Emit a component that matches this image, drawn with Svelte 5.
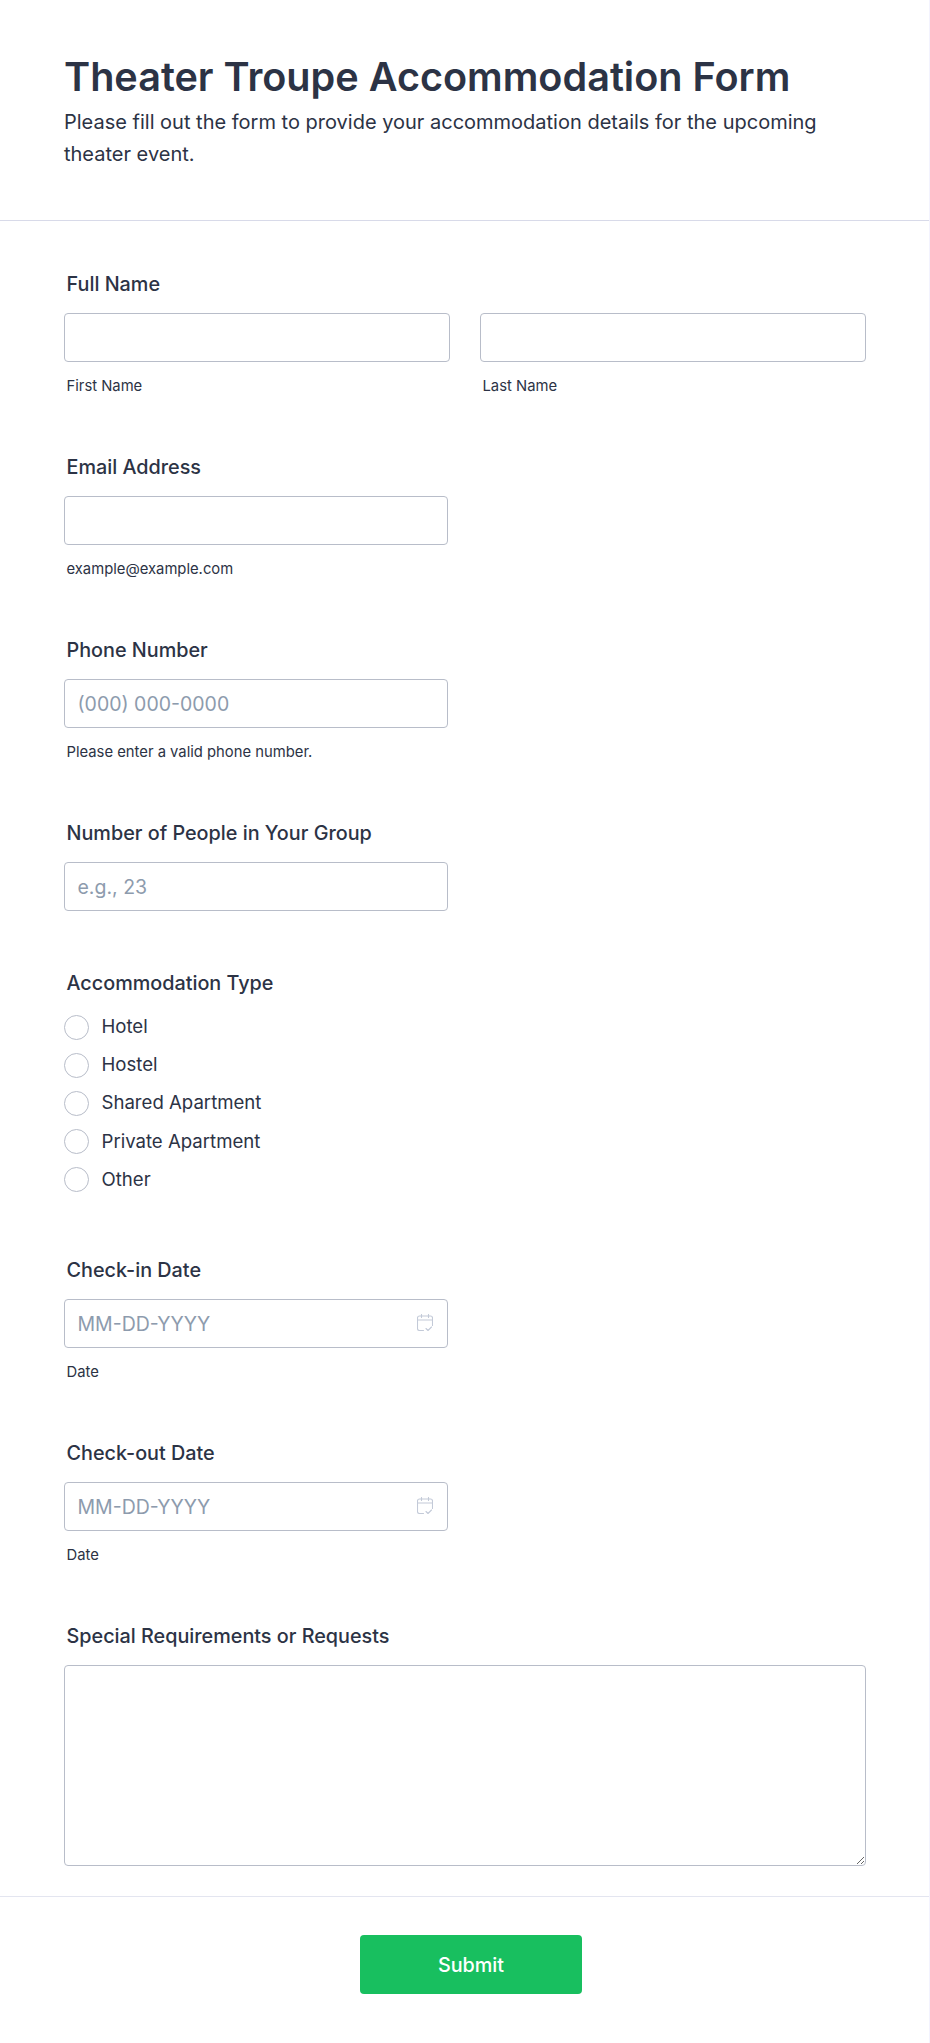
<script lang="ts">
	const ACCOMMODATION_TYPES = ['Hotel', 'Hostel', 'Shared Apartment', 'Private Apartment', 'Other'];
</script>

{#snippet calendar()}
	<svg class="calendar" viewBox="0 0 16 18" fill="none" aria-hidden="true">
		<path d="M6.5 16.5H2.5a2 2 0 0 1-2-2V4a2 2 0 0 1 2-2h11a2 2 0 0 1 2 2v7.5" />
		<path d="M.5 6h15M4.5 .5v3M11.5 .5v3" />
		<path d="M9 14.5l2 2 3.5-3.5" />
	</svg>
{/snippet}

<main class="page">
	<header class="form-header">
		<h1>Theater Troupe Accommodation Form</h1>
		<p>Please fill out the form to provide your accommodation details for the upcoming theater event.</p>
	</header>

	<form class="form-body">
		<div class="field">
			<label class="field-label" for="first">Full Name</label>
			<div class="name-row">
				<div class="name-col">
					<input id="first" type="text" />
					<span class="sub">First Name</span>
				</div>
				<div class="name-col">
					<input id="last" type="text" />
					<span class="sub">Last Name</span>
				</div>
			</div>
		</div>

		<div class="field">
			<label class="field-label" for="email">Email Address</label>
			<input id="email" class="half" type="email" />
			<span class="sub">example@example.com</span>
		</div>

		<div class="field">
			<label class="field-label" for="phone">Phone Number</label>
			<input id="phone" class="half" type="tel" placeholder="(000) 000-0000" />
			<span class="sub">Please enter a valid phone number.</span>
		</div>

		<div class="field">
			<label class="field-label" for="people">Number of People in Your Group</label>
			<input id="people" class="half" type="text" placeholder="e.g., 23" />
		</div>

		<fieldset class="field radios">
			<legend class="field-label">Accommodation Type</legend>
			{#each ACCOMMODATION_TYPES as type}
				<label class="radio">
					<input type="radio" name="accommodation" value={type} />
					<span>{type}</span>
				</label>
			{/each}
		</fieldset>

		<div class="field">
			<label class="field-label" for="checkin">Check-in Date</label>
			<div class="date half">
				<input id="checkin" type="text" placeholder="MM-DD-YYYY" />
				{@render calendar()}
			</div>
			<span class="sub">Date</span>
		</div>

		<div class="field">
			<label class="field-label" for="checkout">Check-out Date</label>
			<div class="date half">
				<input id="checkout" type="text" placeholder="MM-DD-YYYY" />
				{@render calendar()}
			</div>
			<span class="sub">Date</span>
		</div>

		<div class="field requests">
			<label class="field-label" for="requests">Special Requirements or Requests</label>
			<textarea id="requests"></textarea>
		</div>

		<footer class="form-footer">
			<button type="submit">Submit</button>
		</footer>
	</form>
</main>

<style>
	:global(body) {
		background: #fff;
		color: #2c3345;
		font-family: Inter, "Noto Sans", sans-serif;
	}
	.page {
		box-sizing: border-box;
		min-height: 2043px;
		border-right: 1px solid #f3f3fe;
	}
	.form-header {
		padding: 53px 64px 50px;
		border-bottom: 1px solid #d8dae9;
	}
	h1 {
		margin: 0 0 5px;
		font-size: 39.6px;
		line-height: 48px;
		font-weight: 600;
	}
	.form-header p {
		margin: 0;
		font-size: 20px;
		line-height: 32px;
		font-weight: 400;
	}
	.form-body {
		padding: 51px 63px 0 64px;
	}
	.field {
		display: block;
		margin: 0 0 60px;
		padding: 0;
		border: 0;
	}
	.field-label {
		display: block;
		padding: 0;
		margin: 0 0 17px 2.5px;
		font-size: 19.8px;
		line-height: 24px;
		font-weight: 500;
	}
	input[type='text'],
	input[type='email'],
	input[type='tel'],
	textarea {
		display: block;
		box-sizing: border-box;
		width: 100%;
		height: 49px;
		padding: 0 12.5px;
		border: 1px solid #b8bdc9;
		border-radius: 4px;
		background: #fff;
		color: #2c3345;
		font-family: inherit;
		font-size: 19.5px;
		outline: none;
	}
	input::placeholder {
		color: #8d9bad;
		opacity: 1;
	}
	.half,
	input.half {
		width: 383.5px;
	}
	.name-row {
		display: flex;
		gap: 30px;
	}
	.name-col {
		flex: 1;
	}
	.sub {
		display: block;
		margin: 15px 0 0 2.5px;
		font-size: 14.8px;
		line-height: 18px;
	}
	.radios legend {
		margin-bottom: 13px;
	}
	.radio {
		display: flex;
		align-items: center;
		gap: 12.5px;
		height: 38.2px;
		font-size: 18.6px;
	}
	.radio span {
		position: relative;
		top: -1px;
	}
	.radio input {
		appearance: none;
		flex: none;
		width: 25px;
		height: 25px;
		margin: 0;
		border: 1px solid #b8bdc9;
		border-radius: 50%;
		background: #fff;
	}
	.radios {
		margin-bottom: 59.5px;
	}
	.date {
		position: relative;
	}
	.calendar {
		position: absolute;
		top: 15px;
		right: 15px;
		width: 16px;
		height: 18px;
		stroke: #c3cad8;
		stroke-width: 1.1;
		stroke-linecap: round;
		stroke-linejoin: round;
	}
	textarea {
		height: 201px;
		padding: 12px;
		resize: vertical;
	}
	.requests {
		margin-bottom: 30px;
	}
	.form-footer {
		margin: 0 -63px 0 -64px;
		padding: 38px 0 50px;
		border-top: 1px solid #e3e5f0;
		display: flex;
		justify-content: center;
	}
	button {
		width: 222.5px;
		height: 59px;
		margin-left: 13px;
		border: 0;
		border-radius: 4px;
		background: #18bf5f;
		color: #fff;
		font-family: inherit;
		font-size: 19.8px;
		font-weight: 500;
	}
</style>
